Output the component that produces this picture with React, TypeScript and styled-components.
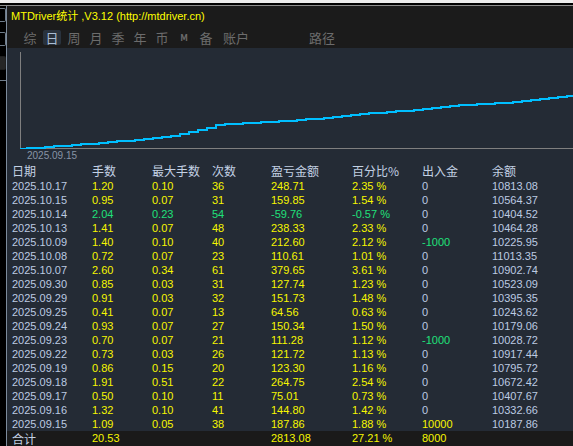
import styled, { createGlobalStyle } from 'styled-components';

const GlobalStyle = createGlobalStyle`
  html, body {
    margin: 0;
    padding: 0;
    background: #000;
    overflow: hidden;
  }
`;

const Window = styled.div`
  width: 573px;
  height: 446px;
  display: flex;
  flex-direction: column;
  background: #000;
  font-family: "Liberation Sans", "Noto Sans CJK SC", sans-serif;
`;

const TopStrip = styled.div`
  height: 3px;
  background: #ececec;
  border-bottom: 2px solid #000;
  box-shadow: 0 1px 0 #8c8c8c;
  margin-bottom: 1px;
  flex-shrink: 0;
`;

const Body = styled.div`
  flex: 1;
  display: flex;
  min-height: 0;
`;

const LeftRail = styled.div`
  width: 6px;
  background: #000;
  border-right: 1px solid #7d8b9c;
  display: flex;
  flex-direction: column;
  gap: 10px;
  padding-top: 2px;
`;

const RailBox = styled.div<{ $fill?: boolean }>`
  height: 12px;
  border: 1px solid ${p => (p.$fill ? '#1e1e1e' : '#6f7c8a')};
  border-left: none;
  border-radius: 0 2px 2px 0;
  background: ${p => (p.$fill ? '#262626' : 'transparent')};
`;

const RailLine = styled.div`
  height: 1px;
  background: #6f7c8a;
`;

const Panel = styled.div`
  flex: 1;
  display: flex;
  flex-direction: column;
  background: #242b35;
  min-width: 0;
`;

const TitleBar = styled.div`
  height: 21px;
  background: #1b1b1b;
  color: #ffff00;
  font-size: 11px;
  line-height: 21px;
  padding-left: 4px;
  white-space: nowrap;
`;

const TabBar = styled.div`
  height: 21px;
  background: #1b1b1b;
  display: flex;
  align-items: center;
  padding-left: 12px;
`;

const Tab = styled.div<{ $active?: boolean; $gap?: number; $small?: boolean }>`
  min-width: 18px;
  height: 15px;
  margin: 0 2px 0 ${p => 2 + (p.$gap ?? 0)}px;
  padding: 0 1px;
  box-sizing: border-box;
  display: flex;
  align-items: center;
  justify-content: center;
  border-radius: 2px;
  background: ${p => (p.$active ? '#29323d' : 'transparent')};
  color: ${p => (p.$active ? '#a9bdd4' : '#6c6c6c')};
  font-family: "Noto Sans CJK SC", sans-serif;
  font-size: ${p => (p.$small ? '9px' : '13px')};
  font-weight: ${p => (p.$small ? 700 : 400)};
  line-height: 15px;
`;

const ChartBox = styled.div`
  height: 115px;
  display: flex;
  flex-direction: column;
`;

const ChartSvg = styled.svg`
  display: block;
  width: 566px;
  height: 101px;
`;

const AxisLabel = styled.div`
  height: 14px;
  line-height: 14px;
  padding-left: 20px;
  font-size: 10px;
  color: #8794a6;
`;

const Table = styled.div`
  display: flex;
  flex-direction: column;
  flex: 1;
`;

const Row = styled.div<{ $head?: boolean; $total?: boolean }>`
  display: grid;
  grid-template-columns: 80px 60px 60px 59px 81px 70px 70px 1fr;
  padding-left: 5px;
  height: ${p => (p.$head ? 16 : p.$total ? 15 : 14)}px;
  line-height: ${p => (p.$head ? 16 : p.$total ? 15 : 14)}px;
  background: ${p => (p.$total ? '#1a1a1a' : 'transparent')};
  margin-top: ${p => (p.$total ? 'auto' : 0)};
  font-size: 11px;
  white-space: nowrap;
`;

const HeadCell = styled.div`
  color: #c3d1e4;
  font-family: "Noto Sans CJK SC", sans-serif;
  font-size: 12px;
`;

const Cell = styled.div<{ $tone?: 'plain' | 'up' | 'down' }>`
  color: ${p =>
    p.$tone === 'plain' ? '#bccae2' : p.$tone === 'down' ? '#1fe07a' : '#f6f600'};
`;

type Day = [string, string, string, string, string, string, string, string];

const days: Day[] = [
  ['2025.10.17', '1.20', '0.10', '36', '248.71', '2.35 %', '0', '10813.08'],
  ['2025.10.15', '0.95', '0.07', '31', '159.85', '1.54 %', '0', '10564.37'],
  ['2025.10.14', '2.04', '0.23', '54', '-59.76', '-0.57 %', '0', '10404.52'],
  ['2025.10.13', '1.41', '0.07', '48', '238.33', '2.33 %', '0', '10464.28'],
  ['2025.10.09', '1.40', '0.10', '40', '212.60', '2.12 %', '-1000', '10225.95'],
  ['2025.10.08', '0.72', '0.07', '23', '110.61', '1.01 %', '0', '11013.35'],
  ['2025.10.07', '2.60', '0.34', '61', '379.65', '3.61 %', '0', '10902.74'],
  ['2025.09.30', '0.85', '0.03', '31', '127.74', '1.23 %', '0', '10523.09'],
  ['2025.09.29', '0.91', '0.03', '32', '151.73', '1.48 %', '0', '10395.35'],
  ['2025.09.25', '0.41', '0.07', '13', '64.56', '0.63 %', '0', '10243.62'],
  ['2025.09.24', '0.93', '0.07', '27', '150.34', '1.50 %', '0', '10179.06'],
  ['2025.09.23', '0.70', '0.07', '21', '111.28', '1.12 %', '-1000', '10028.72'],
  ['2025.09.22', '0.73', '0.03', '26', '121.72', '1.13 %', '0', '10917.44'],
  ['2025.09.19', '0.86', '0.15', '20', '123.30', '1.16 %', '0', '10795.72'],
  ['2025.09.18', '1.91', '0.51', '22', '264.75', '2.54 %', '0', '10672.42'],
  ['2025.09.17', '0.50', '0.10', '11', '75.01', '0.73 %', '0', '10407.67'],
  ['2025.09.16', '1.32', '0.10', '41', '144.80', '1.42 %', '0', '10332.66'],
  ['2025.09.15', '1.09', '0.05', '38', '187.86', '1.88 %', '10000', '10187.86'],
];

const headers = ['日期', '手数', '最大手数', '次数', '盈亏金额', '百分比%', '出入金', '余额'];

// equity curve anchors, in chart pixel space
const anchors: [number, number][] = [
  [13, 101], [93, 95], [126, 92], [153, 89], [166, 88], [193, 82],
  [208, 77], [293, 72], [343, 67], [393, 63], [443, 58], [493, 55], [566, 47],
];

function curveAt(x: number) {
  for (let i = 1; i < anchors.length; i++) {
    const [x0, y0] = anchors[i - 1];
    const [x1, y1] = anchors[i];
    if (x <= x1) return y0 + ((y1 - y0) * (x - x0)) / (x1 - x0);
  }
  return anchors[anchors.length - 1][1];
}

function stepPoints() {
  const pts: string[] = [];
  let prev = 101;
  pts.push(`13,${prev}`);
  for (let x = 20; x <= 566; x += 9) {
    const y = Math.round(curveAt(x));
    pts.push(`${x},${prev}`, `${x},${y}`);
    prev = y;
  }
  pts.push(`566,${prev}`);
  return pts.join(' ');
}

function tone(col: number, value: string): 'plain' | 'up' | 'down' {
  if (col === 0 || col === 7) return 'plain';
  if (col === 6) {
    if (value.startsWith('-')) return 'down';
    return value === '0' ? 'plain' : 'up';
  }
  return 'up';
}

export default function App() {
  return (
    <Window>
      <GlobalStyle />
      <TopStrip />
      <Body>
        <LeftRail>
          <RailBox />
          <RailBox />
          <RailBox $fill />
          <RailLine />
        </LeftRail>
        <Panel>
          <TitleBar>MTDriver统计 ,V3.12 (http://mtdriver.cn)</TitleBar>
          <TabBar>
            <Tab>综</Tab>
            <Tab $active>日</Tab>
            <Tab>周</Tab>
            <Tab>月</Tab>
            <Tab>季</Tab>
            <Tab>年</Tab>
            <Tab>币</Tab>
            <Tab $small>M</Tab>
            <Tab>备</Tab>
            <Tab $gap={3}>账户</Tab>
            <Tab $gap={54}>路径</Tab>
          </TabBar>
          <ChartBox>
            <ChartSvg viewBox="0 0 566 101" shapeRendering="crispEdges">
              <line x1="13.5" y1="4" x2="13.5" y2="101" stroke="#7f7f7f" strokeWidth="1" />
              <line x1="13" y1="100.5" x2="566" y2="100.5" stroke="#7f7f7f" strokeWidth="1" />
              <polyline points={stepPoints()} fill="none" stroke="#00bfff" strokeWidth="2.4" />
            </ChartSvg>
            <AxisLabel>2025.09.15</AxisLabel>
          </ChartBox>
          <Table>
            <Row $head>
              {headers.map(h => (
                <HeadCell key={h}>{h}</HeadCell>
              ))}
            </Row>
            {days.map(d => (
              <Row key={d[0]}>
                {d.map((v, i) => (
                  <Cell key={i} $tone={d[4].startsWith('-') && i > 0 && i < 6 ? 'down' : tone(i, v)}>
                    {v}
                  </Cell>
                ))}
              </Row>
            ))}
            <Row $total>
              <HeadCell>合计</HeadCell>
              <Cell>20.53</Cell>
              <Cell />
              <Cell />
              <Cell>2813.08</Cell>
              <Cell>27.21 %</Cell>
              <Cell>8000</Cell>
              <Cell />
            </Row>
          </Table>
        </Panel>
      </Body>
    </Window>
  );
}
